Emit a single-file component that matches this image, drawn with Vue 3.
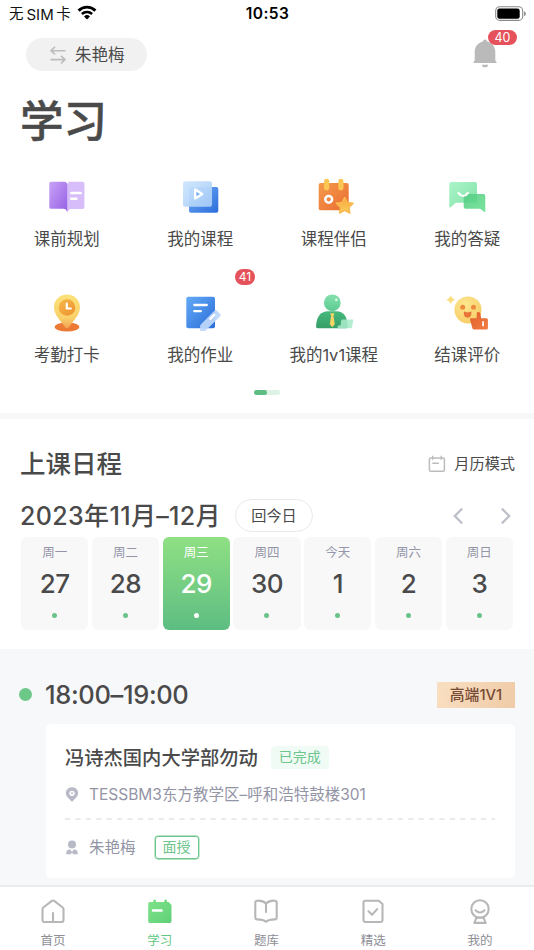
<script setup>
const days = [
  { name: '周一', num: 27 },
  { name: '周二', num: 28 },
  { name: '周三', num: 29, active: true },
  { name: '周四', num: 30 },
  { name: '今天', num: 1 },
  { name: '周六', num: 2 },
  { name: '周日', num: 3 },
]
</script>

<template>
  <div class="screen">
    <header class="status">
      <div class="carrier">
        <span>无</span><span class="sim">SIM</span><span>卡</span>
        <svg class="wifi" viewBox="0 0 20 15" width="20" height="15">
          <path d="M1.6 5.6a12 12 0 0 1 16.8 0" fill="none" stroke="#000" stroke-width="2.9" />
          <path d="M4.9 9a7.4 7.4 0 0 1 10.2 0" fill="none" stroke="#000" stroke-width="2.6" />
          <path d="M10 14.6l-3-3.1a4.4 4.4 0 0 1 6 0z" />
        </svg>
      </div>
      <div class="clock">10:53</div>
      <svg class="battery" viewBox="0 0 32 16" width="32" height="16">
        <rect x=".7" y=".8" width="27" height="13.6" rx="4" fill="none" stroke="#8a8a8a" stroke-width="1.1" />
        <rect x="2.3" y="2.5" width="22.4" height="10.2" rx="2.2" />
        <path d="M29.2 5.2c2 .7 2 4.2 0 4.9z" fill="#777" />
      </svg>
    </header>

    <div class="topbar">
      <div class="user">
        <svg viewBox="0 0 16 18" width="16" height="18" fill="none" stroke="#bdbdbd" stroke-width="1.6">
          <path d="M15.5 4.7H1M5 .9L1 4.7l4 3.7M.5 13.6H15M11 9.8l4 3.8-4 3.7" />
        </svg>
        <span>朱艳梅</span>
      </div>
      <div class="bell">
        <svg viewBox="0 0 24 29" width="24" height="29" fill="#bababa">
          <path d="M12 .4c1.3 0 1.9.9 2 2.2 5 1.2 8.3 5.200 8.300 10.200v8.800l1.200 1.300v1H.5v-1l1.200-1.300v-8.800c0-5 3.300-9 8.300-10.200.1-1.300.7-2.200 2-2.200zM8.800 25.700h6.400c-.2 1.600-1.400 2.600-3.200 2.600s-3-1-3.200-2.600z" />
        </svg>
        <span class="badge">40</span>
      </div>
    </div>

    <h1>学习</h1>

    <section class="apps">
      <div class="app">
        <svg viewBox="0 0 40 40">
          <defs>
            <linearGradient id="bk" x1="0" y1="0" x2="1" y2="1"><stop stop-color="#c8a2f6" /><stop offset="1" stop-color="#9560e4" /></linearGradient>
          </defs>
          <path d="M22 4.700H35.500q1.900 0 1.900 1.900V30q0 1.900-1.900 1.900H23l-3 3V7z" fill="#d7bdf9" />
          <path d="M4.200 4.700H17q3.200 0 3.200 3v27.600c-.5-2.400-1.700-3.500-4-3.500H4.200q-1.900 0-1.900-1.900V6.600q0-1.900 1.900-1.900z" fill="url(#bk)" />
          <path d="M24.300 16h9.500M24.300 21.800h5.200" stroke="#fff" stroke-width="2.400" stroke-linecap="round" />
        </svg>
        <span>课前规划</span>
      </div>
      <div class="app">
        <svg viewBox="0 0 40 40">
          <defs>
            <linearGradient id="cb" x1="0" y1="0" x2="1" y2="1"><stop stop-color="#72abf5" /><stop offset="1" stop-color="#2b6edb" /></linearGradient>
            <linearGradient id="cf" x1="0" y1="0" x2="1" y2="1"><stop stop-color="#cde5fd" /><stop offset="1" stop-color="#a5cbf8" /></linearGradient>
          </defs>
          <rect x="9" y="10" width="29.300" height="25.700" rx="2" fill="url(#cb)" />
          <rect x="3" y="4.200" width="29" height="25.600" rx="2" fill="url(#cf)" opacity=".94" />
          <path d="M15.200 12.600v8.800l7-4.400z" fill="#78b0f2" stroke="#fff" stroke-width="2.400" stroke-linejoin="round" />
        </svg>
        <span>我的课程</span>
      </div>
      <div class="app">
        <svg viewBox="0 0 40 40">
          <defs>
            <linearGradient id="cal" x1="0" y1="0" x2="1" y2="1"><stop stop-color="#f49a4c" /><stop offset="1" stop-color="#ea6d32" /></linearGradient>
            <linearGradient id="st" x1="0" y1="0" x2="0" y2="1"><stop stop-color="#f7a43a" /><stop offset="1" stop-color="#fbd060" /></linearGradient>
          </defs>
          <rect x="4.700" y="6" width="30" height="27.300" rx="2" fill="url(#cal)" />
          <rect x="10" y="1.800" width="5.200" height="11.500" rx="2.600" fill="#fbc653" />
          <rect x="24.300" y="1.800" width="5.200" height="11.500" rx="2.600" fill="#fbc653" />
          <circle cx="14.700" cy="22.300" r="3.400" fill="none" stroke="#fff" stroke-width="2.500" />
          <path d="M30.700 20.600l2.600 5 5.600.8-4.100 3.900 1 5.700-5.100-2.700-5.100 2.700 1-5.700-4.100-3.900 5.600-.8z" fill="url(#st)" stroke="#f9b94d" stroke-width="1.600" stroke-linejoin="round" />
        </svg>
        <span>课程伴侣</span>
      </div>
      <div class="app">
        <svg viewBox="0 0 40 40">
          <defs>
            <linearGradient id="m1" x1="0" y1="0" x2="1" y2="1"><stop stop-color="#abf4c9" /><stop offset="1" stop-color="#82e2a7" /></linearGradient>
            <linearGradient id="m2" x1="0" y1="0" x2="1" y2="1"><stop stop-color="#54c982" /><stop offset="1" stop-color="#65e28f" /></linearGradient>
          </defs>
          <path d="M4 5h24.200Q30 5 30 6.800v17q0 1.900-1.800 1.900H8.800L3.700 30.300q-1.400.8-1.400-.8V6.800Q2.300 5 4 5z" fill="url(#m1)" />
          <path d="M18.500 17h18q1.800 0 1.800 1.800v15.400q0 1.200-1.200.5l-4-3H18.500q-1.800 0-1.800-1.800V18.800q0-1.800 1.800-1.800z" fill="url(#m2)" opacity=".88" />
          <path d="M11.500 16q4.700 6 9.400 0" fill="none" stroke="#fff" stroke-width="2.200" stroke-linecap="round" />
        </svg>
        <span>我的答疑</span>
      </div>
      <div class="app">
        <svg viewBox="0 0 40 40">
          <defs>
            <linearGradient id="pn" x1="0" y1="0" x2="0" y2="1"><stop stop-color="#fbe27a" /><stop offset=".7" stop-color="#f9d06a" /><stop offset="1" stop-color="#f3a052" /></linearGradient>
            <linearGradient id="pc" x1="0" y1="0" x2="1" y2="1"><stop stop-color="#f6b84a" /><stop offset="1" stop-color="#ee9130" /></linearGradient>
          </defs>
          <ellipse cx="20" cy="34" rx="12.300" ry="4.500" fill="#ec7a35" />
          <path d="M20 1.500c7.300 0 13 5.500 13 12.500 0 8-6.500 13.500-11 20.200q-2 2-4 0C13.500 27.500 7 22 7 14 7 7 12.700 1.500 20 1.500z" fill="url(#pn)" />
          <circle cx="20" cy="14.500" r="8.300" fill="url(#pc)" />
          <path d="M19.800 10.500v5h4" fill="none" stroke="#fff" stroke-width="2.200" stroke-linecap="round" stroke-linejoin="round" />
        </svg>
        <span>考勤打卡</span>
      </div>
      <div class="app">
        <svg viewBox="0 0 40 40">
          <defs>
            <linearGradient id="hw" x1="0" y1="0" x2="1" y2="1"><stop stop-color="#62aaf7" /><stop offset="1" stop-color="#2c6dd8" /></linearGradient>
          </defs>
          <rect x="6.300" y="3.700" width="28.700" height="31.600" rx="2" fill="url(#hw)" />
          <path d="M14.300 12h12.500M14.300 18.200h6.500" stroke="#fff" stroke-width="2.300" stroke-linecap="round" />
          <path d="M36.300 17.200l4.100 4.100q.8.800 0 1.700L26 37.300q-.7.700-1.700.7h-4.200v-4.800q0-.9.700-1.600l14-14.400q.8-.8 1.500 0z" fill="#bdd7fb" opacity=".94" />
          <path d="M30.300 25.900l4-4" stroke="#fff" stroke-width="2.200" stroke-linecap="round" />
        </svg>
        <span>我的作业</span>
        <b class="badge count">41</b>
      </div>
      <div class="app">
        <svg viewBox="0 0 40 40">
          <defs>
            <linearGradient id="tb" x1="0" y1="0" x2="0" y2="1"><stop stop-color="#46b97c" /><stop offset="1" stop-color="#359e69" /></linearGradient>
            <linearGradient id="th" x1="0" y1="0" x2="0" y2="1"><stop stop-color="#86e0ae" /><stop offset="1" stop-color="#5ccb91" /></linearGradient>
          </defs>
          <path d="M2 33.500C2.500 23 7 18.200 14 18.200h8.500c7 0 10.800 5 11.300 15.300q0 1.700-1.700 1.700H3.700Q2 35.200 2 33.500z" fill="url(#tb)" />
          <circle cx="18.300" cy="9.800" r="8.400" fill="url(#th)" />
          <circle cx="22.300" cy="6.800" r="1.400" fill="#d9f7e6" />
          <path d="M16.200 20.300h4.200l-.9 3 1.300 8-2.500 3-2.500-3 1.300-8z" fill="#f6d365" />
          <path d="M28 26.600h10.500q.8 0 .7.800L38 34.300q-.2.900-1 .9H24.600q-1 0-1-.9v-1q0-.8.900-.8h2l.7-5q.1-.9.800-.9z" fill="#abebcb" opacity=".88" />
        </svg>
        <span>我的1v1课程</span>
      </div>
      <div class="app">
        <svg viewBox="0 0 40 40">
          <defs>
            <radialGradient id="fc" cx=".4" cy=".3" r=".8"><stop stop-color="#fce78f" /><stop offset="1" stop-color="#f6ca62" /></radialGradient>
            <linearGradient id="tm" x1="0" y1="0" x2="1" y2="1"><stop stop-color="#e05f2d" /><stop offset="1" stop-color="#f27d40" /></linearGradient>
          </defs>
          <circle cx="21" cy="16.900" r="13.500" fill="url(#fc)" />
          <path d="M3.700 2.500q1 3.300 4.300 4.300-3.300 1-4.300 4.300-1-3.300-4.300-4.300 3.300-1 4.300-4.300z" fill="#f9dc7c" />
          <circle cx="15.700" cy="14.200" r="2.500" fill="#ed8b3c" />
          <circle cx="26.500" cy="14.200" r="2.500" fill="#ed8b3c" />
          <path d="M17 18.500l3.600 1 3.600-1c.8 3.500-1 6.200-3.600 6.200S16.200 22 17 18.500z" fill="#e8743a" />
          <path d="M23.500 25.200h6.200l.1-4.800c.1-1.900 3.200-1.900 3.600.3l.8 4.500h5.200q1.500 0 1.500 1.500V35q0 1.500-1.500 1.500H27.200q-1.300 0-1.800-1.300l-2.200-8q-.4-1.800.3-2z" fill="url(#tm)" />
          <path d="M36.100 28.200v5" stroke="#fff" stroke-width="1.700" />
        </svg>
        <span>结课评价</span>
      </div>
    </section>
    <div class="pager"><i></i></div>

    <section class="schedule">
      <div class="row heading">
        <h2>上课日程</h2>
        <div class="mode">
          <svg viewBox="0 0 18 18" width="18" height="18" fill="none" stroke="#bcbcbc" stroke-width="1.500">
            <rect x="1.400" y="3" width="15" height="13.300" rx="1.300" />
            <path d="M4.700.7v4M13.200.7v4M4.300 8.300H11" stroke-width="1.400" />
          </svg>
          <span>月历模式</span>
        </div>
      </div>
      <div class="row month">
        <h3>2023年11月–12月</h3>
        <button>回今日</button>
        <div class="arrows">
          <svg viewBox="0 0 10 16" width="10" height="16"><path d="M8.500 1.300L1.800 8l6.700 6.700" /></svg>
          <svg viewBox="0 0 10 16" width="10" height="16"><path d="M1.500 1.300L8.200 8l-6.700 6.700" /></svg>
        </div>
      </div>
      <div class="week">
        <div v-for="d in days" :key="d.name" class="day" :class="{ active: d.active }">
          <span>{{ d.name }}</span>
          <b>{{ d.num }}</b>
          <i></i>
        </div>
      </div>
    </section>

    <section class="lessons">
      <div class="time">
        <i></i>
        <b>18:00–19:00</b>
        <span class="tag">高端1V1</span>
      </div>
      <article>
        <div class="name"><b>冯诗杰国内大学部勿动</b><em>已完成</em></div>
        <div class="meta place">
          <svg viewBox="0 0 14 15" width="14" height="15">
            <path d="M7 .3c3.600 0 6.100 2.500 6.100 5.900 0 3.300-3 5.500-6.100 8.500C3.900 11.700.9 9.500.9 6.200.9 2.800 3.400.3 7 .3z" fill="#b9bac8" />
            <circle cx="7" cy="6.300" r="2.600" fill="#fff" /><circle cx="7" cy="6.300" r="1" fill="#b9bac8" />
          </svg>
          <span>TESSBM3东方教学区–呼和浩特鼓楼301</span>
        </div>
        <svg class="dash" viewBox="0 0 430 2" width="430" height="2"><path d="M0 1h430" stroke="#e5e5ea" stroke-width="1.500" stroke-dasharray="5.200 5.200" /></svg>
        <div class="meta teacher">
          <svg viewBox="0 0 14 15" width="14" height="15" fill="#b9bac8">
            <circle cx="7" cy="4.500" r="4" />
            <path d="M4.600 9.300L7 11.600l2.400-2.300c2.400.5 3.500 2 3.500 4.900H8.100L7 12.300l-1.100 1.900H1.100c0-2.900 1.100-4.400 3.500-4.900z" />
          </svg>
          <span>朱艳梅</span>
          <em>面授</em>
        </div>
      </article>
    </section>

    <nav>
      <div class="tab">
        <svg viewBox="0 0 26 26"><path d="M2.500 10.200Q2.500 9.200 3.300 8.500L11.800 1.900q1.200-.9 2.400 0L22.700 8.500q.8.700.8 1.700v10.500q0 2.300-2.300 2.300H4.800q-2.300 0-2.300-2.300zM13 14v8.500" /></svg>
        <span>首页</span>
      </div>
      <div class="tab on">
        <svg viewBox="0 0 26 26">
          <defs><linearGradient id="tabfill" x1="0" y1="0" x2="1" y2="1"><stop stop-color="#80e38a" /><stop offset="1" stop-color="#5fd077" /></linearGradient></defs>
          <path class="solid" d="M2.700 3h3.600V1.800q0-1.200 1.400-1.200T9 1.800V3h8.300V1.800q0-1.200 1.400-1.200T20 1.800V3h1.600l2.900 2.900v16.400q0 1.700-1.700 1.700H2.700Q1.200 24 1.200 22.300V4.500Q1.200 3 2.700 3z" />
          <path class="mark" d="M6 11.500h8.500" />
        </svg>
        <span>学习</span>
      </div>
      <div class="tab">
        <svg viewBox="0 0 26 26"><path d="M13 4.500C11 2.500 8 1.500 4.300 1.700q-2 .1-2 2v14.800q0 1.900 1.900 1.900c3.800 0 6.600.4 8.800 2.400 2.200-2 5-2.400 8.800-2.400q1.900 0 1.900-1.900V3.700q0-1.900-2-2C18 1.500 15 2.500 13 4.500zM13 4.500v8.500" /></svg>
        <span>题库</span>
      </div>
      <div class="tab">
        <svg viewBox="0 0 26 26"><path d="M5.300 1.700h13.400L22.500 5v16q0 2-2 2h-15q-2 0-2-2V3.700q0-2 1.800-2zM8.500 12.300l3.500 3.400 5.200-5.600" /></svg>
        <span>精选</span>
      </div>
      <div class="tab">
        <svg viewBox="0 0 26 26"><circle cx="13" cy="10" r="8.700" /><path d="M8.500 11.300q4.500 4.500 9 0M9.500 18.700L7.300 23.900h11.400l-2.200-5.200M9 19.200q4-1.500 8 0" /></svg>
        <span>我的</span>
      </div>
    </nav>
  </div>
</template>

<style>
body { margin: 0; background: #fff; }
</style>

<style scoped>
.screen {
  width: 534px;
  height: 950px;
  overflow: hidden;
  display: flex;
  flex-direction: column;
  background: #fff;
  color: #4a4a4a;
  font-family: Inter, "Noto Sans CJK SC", sans-serif;
  font-size: 16.5px;
  line-height: 1;
}
svg { display: block; flex: none; overflow: visible; }
em, i { font-style: normal; }
h1, h2, h3 { margin: 0; font-weight: 500; white-space: nowrap; }
span, b, em { white-space: nowrap; }

.status {
  height: 28px;
  display: grid;
  grid-template-columns: 1fr auto 1fr;
  align-items: center;
  padding: 0 8px 0 9px;
  box-sizing: border-box;
  color: #111;
  flex: none;
}
.carrier { display: flex; align-items: center; font-size: 14.5px; }
.sim { margin: 0 2.500px 0 3px; font-size: 15px; }
.wifi { margin-left: 6px; margin-top: -3px; }
.clock { font-size: 15.500px; font-weight: 600; letter-spacing: .4px; color: #000; }
.battery { justify-self: end; margin-top: -1px; margin-right: -1px; }

.topbar { display: flex; justify-content: space-between; padding: 10px 37px 0 26px; height: 43px; box-sizing: border-box; flex: none; }
.user {
  width: 121px;
  height: 33px;
  border-radius: 17px;
  background: #f1f1f1;
  display: flex;
  align-items: center;
  gap: 9px;
  padding-left: 24px;
  box-sizing: border-box;
}
.user span { font-size: 16.5px; padding-top: 2px; }
.bell { position: relative; height: 29px; margin-top: .5px; }
.badge {
  position: absolute;
  left: 15px;
  top: -8.500px;
  width: 29px;
  height: 15px;
  border-radius: 8px;
  background: #e5525b;
  color: #fff;
  font-size: 12.500px;
  font-weight: 400;
  line-height: 15px;
  text-align: center;
}
h1 { font-size: 43.500px; line-height: 60px; margin: 20px 0 0 20px; flex: none; -webkit-text-stroke: .5px #4a4a4a; }

.apps { display: grid; grid-template-columns: repeat(4, 1fr); grid-auto-rows: 116px; margin-top: 26px; height: 210px; flex: none; }
.app { position: relative; display: flex; flex-direction: column; align-items: center; }
.app svg { width: 40px; height: 40px; }
.app span { margin-top: 10.500px; line-height: 22px; }
.app .count { left: auto; right: 12px; top: -24px; width: 20px; height: 16px; line-height: 16px; font-size: 12px; }
.pager { width: 26px; height: 5px; border-radius: 3px; background: #dcf3e5; margin: 3px 0 0 254px; flex: none; }
.pager i { display: block; width: 13px; height: 5px; border-radius: 3px; background: #5dbd83; }

.schedule { margin-top: 18px; border-top: 6px solid #f7f8fa; height: 230px; padding: 0 20px; flex: none; }
.row { display: flex; align-items: center; }
.heading { height: 36px; padding-top: 27px; justify-content: space-between; }
h2 { font-size: 25.500px; }
.mode { display: flex; align-items: center; gap: 8px; font-size: 15.200px; margin-right: -1px; }
.month { height: 33px; padding-top: 17px; }
h3 { font-size: 25px; letter-spacing: .36px; padding-top: 1px; }
button {
  width: 78px;
  height: 33px;
  margin-left: 14px;
  padding: 0 0 3px;
  border: 1px solid #e9e9e9;
  border-radius: 17px;
  background: #fff;
  color: #4a4a4a;
  font: 15.200px Inter, "Noto Sans CJK SC", sans-serif;
}
.arrows { margin-left: auto; display: flex; gap: 38px; padding-right: 3px; }
.arrows path { fill: none; stroke: #bcbec8; stroke-width: 2.300; stroke-linecap: round; }
.week { display: grid; grid-template-columns: repeat(7, 1fr); gap: 3.500px; margin: 5px 1px 0; }
.day { height: 93px; border-radius: 6px; background: #f8f8f9; display: flex; flex-direction: column; align-items: center; }
.day span { font-size: 12.500px; line-height: 18px; margin-top: 7px; color: #9495a8; }
.day b { font-size: 26px; font-weight: 500; line-height: 32px; margin-top: 6px; letter-spacing: -.5px; }
.day i { width: 5px; height: 5px; border-radius: 50%; background: #6ac389; margin-top: 13px; }
.day.active { background: linear-gradient(#90e083, #5dbd82); }
.day.active span, .day.active b { color: #fff; }
.day.active i { background: #fff; }

.lessons { background: #f7f8fa; height: 236px; padding: 28px 19px 0; box-sizing: border-box; flex: none; }
.time { height: 35px; display: flex; align-items: center; }
.time i { width: 13px; height: 13px; border-radius: 50%; background: #6cc888; margin-right: 13px; }
.time b { font-size: 25.500px; font-weight: 500; letter-spacing: -.35px; }
.tag {
  margin-left: auto;
  width: 78px;
  height: 26px;
  line-height: 26px;
  text-align: center;
  font-size: 14.800px;
  font-weight: 500;
  color: #764a34;
  background: linear-gradient(110deg, #f9dfc1, #efcba8);
}
article { margin: 12px 0 0 27px; height: 154px; border-radius: 5px; background: #fff; padding: 20px 0 0 19px; box-sizing: border-box; }
.name { height: 26px; display: flex; align-items: center; }
.name b { font-size: 19.300px; font-weight: 500; padding-top: 3px; }
.name em { margin-left: 13px; width: 58px; height: 23px; line-height: 22px; border-radius: 4px; background: #f0fbf5; color: #6cc58b; text-align: center; font-size: 14px; }
.meta { display: flex; align-items: center; font-size: 15.500px; color: #9394a5; height: 24px; }
.meta > span { margin-left: 10px; padding-top: 2px; }
.place { margin-top: 12px; }
.dash { margin-top: 12px; }
.teacher { margin-top: 15px; }
.teacher em { margin-left: 19px; width: 44px; height: 23px; line-height: 20px; border: 1.500px solid #6cc58b; box-shadow: 0 0 0 .4px #6cc58b; border-radius: 3px; box-sizing: border-box; color: #6cc58b; text-align: center; font-size: 14px; }

nav { display: grid; grid-template-columns: repeat(5, 1fr); border-top: 2px solid #ececee; flex: 1; background: #fff; }
.tab { display: flex; flex-direction: column; align-items: center; padding: 12px 1px 0 0; font-size: 12.500px; color: #8e8e96; }
.tab svg { width: 26px; height: 26px; }
.tab path, .tab circle { fill: none; stroke: #b7b7b7; stroke-width: 2.100; stroke-linejoin: round; stroke-linecap: round; }
.tab .solid { fill: url(#tabfill); stroke: none; }
.tab .mark { stroke: #fff; stroke-width: 2.500; }
.tab span { line-height: 18px; margin-top: 7px; }
.tab.on { color: #5fc883; }
</style>
